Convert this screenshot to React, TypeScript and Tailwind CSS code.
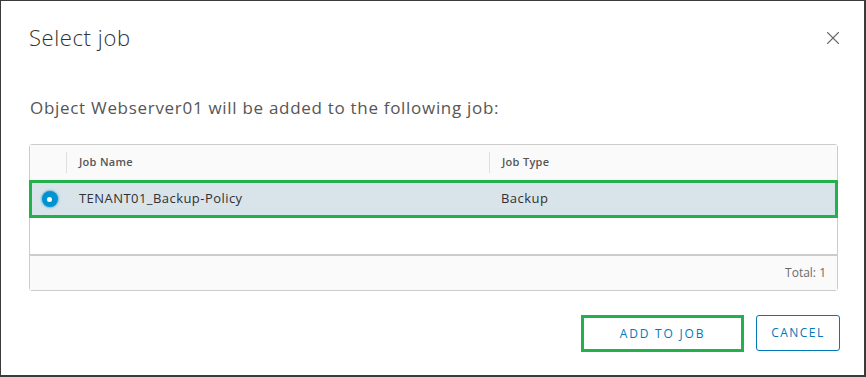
import { X } from "lucide-react";

const font = { fontFamily: "'Open Sans', Lato, sans-serif" };

const rows = [{ name: "TENANT01_Backup-Policy", type: "Backup" }];

export default function App() {
  return (
    <div
      style={font}
      className="flex h-[377px] w-[866px] flex-col border-t border-l border-r-2 border-b-2 border-[#3a3a3a] bg-white text-[#565656]"
    >
      <div className="flex items-start justify-between pl-[28px] pr-[20px] pt-[22px]">
        <h2 className="text-[22px] font-light leading-[28px] tracking-[0.6px] text-[#313131]">Select job</h2>
        <button className="mt-[4px] text-[#6a6a6a]">
          <X size={22} strokeWidth={1.2} />
        </button>
      </div>

      <p className="mt-[47px] pl-[29px] text-[17px] font-normal leading-[20px] tracking-[0.7px] text-[#565656]">
        Object Webserver01 will be added to the following job:
      </p>

      <div className="mx-[28px] mt-[26px] w-[809px] rounded-[3px] border border-[#cccccc] text-[13px]">
        <div className="flex h-[35px] items-center bg-[#fafafa] text-[11px] font-semibold tracking-[0.3px] text-[#565656]">
          <div className="flex h-[21px] w-[37px] shrink-0 border-r border-[#e0e0e0]" />
          <div className="flex h-[21px] w-[423px] items-center border-r border-[#e0e0e0] pl-[12px]">Job Name</div>
          <div className="pl-[12px]">Job Type</div>
        </div>
        {rows.map((r) => (
          <div
            key={r.name}
            className="-mx-px flex h-[38px] items-center border-[3px] border-[#22b14c] bg-[#d9e4ea] tracking-[0.45px] text-[#313131]"
          >
            <div className="flex w-[35px] shrink-0 justify-center">
              <span className="flex h-[16px] w-[16px] items-center justify-center rounded-full bg-[#0092d1] shadow-[0_0_2px_1px_rgba(0,146,209,0.5)]">
                <span className="h-[5px] w-[5px] rounded-full bg-white" />
              </span>
            </div>
            <div className="w-[423px] pl-[12px]">{r.name}</div>
            <div className="pl-[11px]">{r.type}</div>
          </div>
        ))}
        <div className="h-[36px]" />
        <div className="flex h-[36px] items-center justify-end border-t-2 border-[#cccccc] bg-[#fafafa] pr-[11px] text-[12px] text-[#6a6a6a]">
          Total: 1
        </div>
      </div>

      <div className="mt-[24px] flex justify-end gap-[12px] pr-[24px]">
        <button className="flex h-[37px] w-[163px] items-center justify-center border-[3px] border-[#22b14c] text-[12px] tracking-[0.15em] text-[#0079b8]">
          ADD TO JOB
        </button>
        <button className="flex h-[36px] w-[84px] items-center justify-center rounded-[3px] border border-[#0079b8] text-[12px] tracking-[0.12em] text-[#0079b8]">
          CANCEL
        </button>
      </div>
    </div>
  );
}
